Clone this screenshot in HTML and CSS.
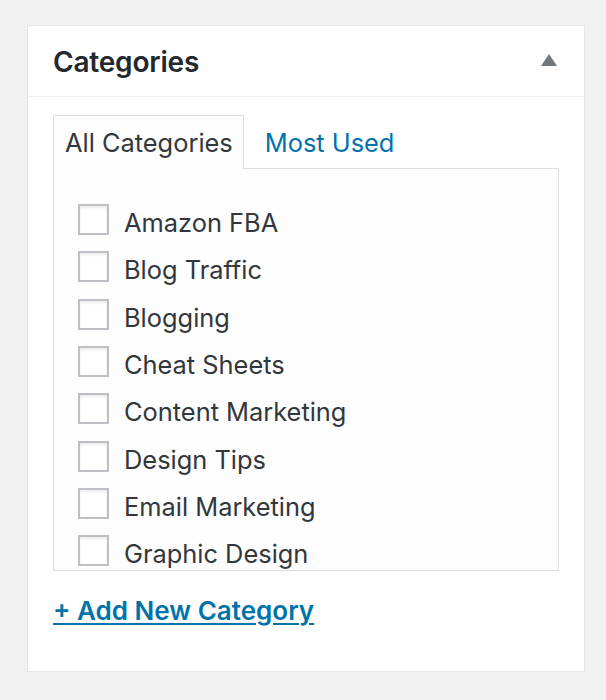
FILE: index.html
```html
<!DOCTYPE html>
<html>
<head>
<meta charset="utf-8">
<link rel="stylesheet" href="styles.css">
</head>
<body>
<div class="wrap">
  <div class="card">
    <div class="card-header">
      <h2 class="title">Categories</h2>
      <svg class="toggle" width="16" height="12" viewBox="0 0 16 12"><polygon points="8,0 16,12 0,12" fill="#72777c"/></svg>
    </div>
    <div class="inside">
      <ul class="tabs">
        <li class="tab active">All Categories</li>
        <li class="tab"><a href="#">Most Used</a></li>
      </ul>
      <div class="panel">
        <ul class="list">
          <li class="row"><span class="box"></span><span class="label">Amazon FBA</span></li>
          <li class="row"><span class="box"></span><span class="label">Blog Traffic</span></li>
          <li class="row"><span class="box"></span><span class="label">Blogging</span></li>
          <li class="row"><span class="box"></span><span class="label">Cheat Sheets</span></li>
          <li class="row"><span class="box"></span><span class="label">Content Marketing</span></li>
          <li class="row"><span class="box"></span><span class="label">Design Tips</span></li>
          <li class="row"><span class="box"></span><span class="label">Email Marketing</span></li>
          <li class="row"><span class="box"></span><span class="label">Graphic Design</span></li>
          <li class="row"><span class="box"></span><span class="label">Instagram</span></li>
        </ul>
      </div>
      <div class="add-row"><a class="add" href="#">+ Add New Category</a></div>
    </div>
  </div>
</div>
</body>
</html>
```
FILE: styles.css
```css
html, body {
  margin: 0;
  padding: 0;
  background: #f1f1f1;
}
body {
  font-family: Inter, "Liberation Sans", sans-serif;
  color: #32373c;
}
.wrap {
  padding: 25px 21px 0 27px;
}
.card {
  box-sizing: border-box;
  height: 647px;
  background: #fff;
  border: 1px solid #e5e5e5;
  box-shadow: 0 1px 1px rgba(0,0,0,0.04);
}
.card-header {
  box-sizing: border-box;
  height: 71px;
  border-bottom: 1px solid #eeeeee;
  display: flex;
  align-items: center;
  justify-content: space-between;
  padding: 0 27px 0 25px;
}
.title {
  margin: 0;
  font-size: 28px;
  font-weight: 600;
  color: #23282d;
  letter-spacing: -0.2px;
  padding-top: 2px;
}
.toggle {
  display: block;
  margin-top: -2px;
}
.inside {
  padding: 18px 25px 0 25px;
}
.tabs {
  list-style: none;
  margin: 0;
  padding: 0;
  display: flex;
  align-items: flex-end;
  position: relative;
  z-index: 1;
  margin-bottom: -1px;
}
.tab {
  box-sizing: border-box;
  height: 54px;
  padding: 0 10px 0 11px;
  display: flex;
  align-items: center;
  font-size: 25.4px;
  border: 1px solid transparent;
  border-bottom: none;
  color: #32373c;
}
.tab.active {
  border-color: #dddddd;
  background: #fdfdfd;
}
.tab a {
  color: #0073aa;
  text-decoration: none;
  padding-left: 9px;
}
.panel {
  box-sizing: border-box;
  height: 403px;
  border: 1px solid #dddddd;
  background: #fdfdfd;
  overflow: hidden;
  padding: 35px 0 0 24px;
}
.list {
  list-style: none;
  margin: 0;
  padding: 0;
}
.row {
  height: 47.33px;
  display: flex;
  align-items: flex-start;
}
.box {
  box-sizing: border-box;
  width: 31px;
  height: 31px;
  border: 2px solid #bcc0c4;
  background: #fff;
  box-shadow: inset 0 2px 3px rgba(0,0,0,0.08);
  flex: none;
}
.label {
  margin-left: 15px;
  font-size: 25.4px;
  line-height: 31px;
  padding-top: 3px;
  color: #32373c;
}
.add-row {
  padding-top: 21px;
  line-height: 38px;
}
.add {
  font-size: 26px;
  font-weight: 600;
  color: #0073aa;
  text-decoration: underline;
  text-underline-offset: 3px;
  text-decoration-thickness: 2px;
}
```
